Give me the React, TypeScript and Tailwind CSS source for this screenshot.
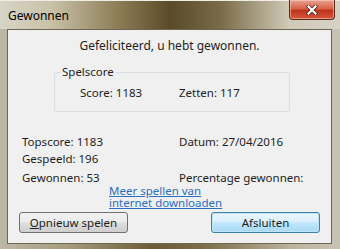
import React from "react";

export default function App() {
  return (
    <div
      className="w-[340px] h-[249px] relative overflow-hidden text-[11.5px] text-[#1e1e1e] bg-[linear-gradient(90deg,#bdb8a6_0%,#a59c7f_20%,#6b5a36_45%,#7c6d4b_60%,#b9b29c_85%,#c8c3b3_100%)]"
      style={{ fontFamily: '"Noto Sans", "Open Sans", sans-serif' }}
    >
      {/* Title bar */}
      <div className="h-[29px] flex items-start justify-between bg-[linear-gradient(90deg,#d8d4c6_0%,#c9c2a8_15%,#8c7c55_35%,#5a4a28_50%,#7a6c48_65%,#cfcab7_85%,#d6d2c4_100%)] border-t border-[#f0eee4]">
        <span className="pl-[8px] pt-[6px] text-[12px] text-black">Gewonnen</span>
        <div className="mr-[5px] w-[46px] h-[20px] -mt-px rounded-b-[4px] border border-[#5a2a1c] border-t-0 bg-[linear-gradient(180deg,#e8a493_0%,#d6624a_45%,#c0331c_55%,#d4573c_100%)] flex items-center justify-center shadow-[inset_0_0_0_1px_rgba(255,220,200,0.5)]">
          <svg width="12" height="10" viewBox="0 0 12 10">
            <path d="M2.5 1.5 L9.5 8.5 M9.5 1.5 L2.5 8.5" stroke="#3b1a10" strokeWidth="3.6" strokeLinecap="square" />
            <path d="M2.5 1.5 L9.5 8.5 M9.5 1.5 L2.5 8.5" stroke="#ffffff" strokeWidth="2.2" strokeLinecap="square" />
          </svg>
        </div>
      </div>

      {/* Client area */}
      <div className="ml-[7px] w-[325px] h-[215px] border border-[#6d6650] bg-[#f0f0f0] flex flex-col">
        <p className="text-center pt-[8px] leading-[16px] text-[12px]">Gefeliciteerd, u hebt gewonnen.</p>

        {/* Group box */}
        <div className="relative ml-[46px] mt-[18px] w-[236px] h-[40px] border border-[#d5dfe5] rounded-[3px]">
          <span className="absolute left-[5px] -top-[9px] px-[2px] bg-[#f0f0f0] leading-[16px]">Spelscore</span>
          <div className="flex pt-[12px] leading-[16px]">
            <span className="ml-[25px] w-[99px]">Score: 1183</span>
            <span>Zetten: 117</span>
          </div>
        </div>

        {/* Stats */}
        <div className="mt-[21px] ml-[14px] flex flex-col leading-[17px]">
          <div className="flex">
            <span className="w-[157px]">Topscore: 1183</span>
            <span>Datum: 27/04/2016</span>
          </div>
          <div className="flex">
            <span className="w-[157px]">Gespeeld: 196</span>
          </div>
          <div className="flex mt-[2px]">
            <span className="w-[157px]">Gewonnen: 53</span>
            <span>Percentage gewonnen:</span>
          </div>
        </div>

        <p className="ml-[101px] -mt-[1px] leading-[12px] text-[#2a6fc0] underline">
          Meer spellen van
          <br />
          internet downloaden
        </p>

        {/* Buttons */}
        <div className="flex justify-between px-[11px] mt-[3px]">
          <button className="w-[109px] h-[21px] rounded-[3px] border border-[#707070] bg-[linear-gradient(180deg,#f2f2f2_0%,#ebebeb_45%,#dddddd_55%,#cfcfcf_100%)] leading-[18px]">
            <span className="underline">O</span>pnieuw spelen
          </button>
          <button className="w-[109px] h-[21px] rounded-[3px] border border-[#3c7fb1] bg-[linear-gradient(180deg,#eaf6fd_0%,#d9f0fc_45%,#bee6fd_55%,#a7d9f5_100%)] shadow-[inset_0_0_0_1px_#bfe4f7] leading-[18px]">
            Afsluiten
          </button>
        </div>
      </div>
    </div>
  );
}
